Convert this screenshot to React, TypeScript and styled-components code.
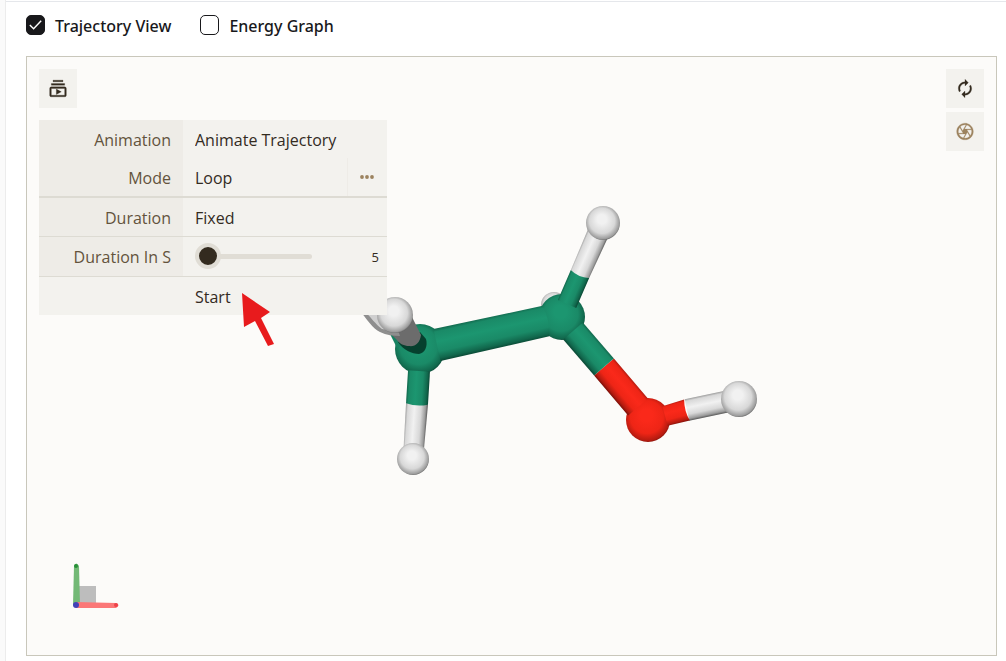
import React, { useState } from "react";
import styled, { createGlobalStyle, css } from "styled-components";

const Global = createGlobalStyle`
  *, *::before, *::after { box-sizing: border-box; }
  body { margin: 0; background: #fafafa; font-family: "Segoe UI", "Open Sans", "Noto Sans", sans-serif; color: #332b1f; }
  button, input, select { font: inherit; color: inherit; margin: 0; }
`;

const Page = styled.main`
  min-height: 100vh;
  display: flex;
  flex-direction: column;
  gap: 20px;
  margin-left: 5px;
  padding: 14px 9px 5px 20px;
  background: #fff;
  border-left: 1px solid #ececec;
  box-shadow: inset 0 1px #fff, inset 0 2px #e5e7eb;
`;

const Options = styled.div`
  display: flex;
  gap: 29px;
  height: 22px;
`;

const Option = styled.label`
  display: flex;
  align-items: center;
  gap: 10px;
  font: 500 16px/22px "Segoe UI", "Noto Sans", sans-serif;
  color: #18181b;
`;

const OptionText = styled.span`
  padding-top: 2px;
`;

const Check = styled.input`
  appearance: none;
  width: 19px;
  height: 20px;
  border: 1px solid #18181b;
  border-radius: 5px;
  background: #fff;
  &:checked {
    background: #18181b url("data:image/svg+xml,%3Csvg xmlns='http://www.w3.org/2000/svg' viewBox='0 0 18 18'%3E%3Cpath d='M3 9.500l4 4L15 5' fill='none' stroke='white' stroke-width='1.500'/%3E%3C/svg%3E");
  }
`;

const Viewer = styled.section`
  position: relative;
  flex: 1;
  display: flex;
  justify-content: space-between;
  align-items: flex-start;
  min-height: 600px;
  padding: 12px;
  border: 1px solid #c9c7bb;
  background: #fcfbf9;
`;

const Scene = styled.svg`
  position: absolute;
  inset: 0;
`;

const Column = styled.div<{ $gap: number }>`
  position: relative;
  display: flex;
  flex-direction: column;
  gap: ${(p) => p.$gap}px;
`;

const IconButton = styled.button<{ $muted?: boolean }>`
  display: grid;
  place-items: center;
  width: 38px;
  height: 39px;
  padding: 0;
  border: 0;
  background: #f3f2ee;
  color: ${(p) => (p.$muted ? "#9c835f" : "#332b1f")};
`;

const Panel = styled.form`
  width: 348px;
  font-size: 16px;
  background: #f3f2ee;
`;

const Row = styled.div<{ $rule?: number }>`
  display: grid;
  grid-template-columns: 144px 1fr auto;
  box-sizing: content-box;
  min-height: 38px;
  ${(p) =>
    p.$rule &&
    css`
      border-top: ${p.$rule}px solid #dddbd3;
    `}
`;

const Name = styled.label`
  padding: 2px 12px 0 0;
  background: #eeece7;
  color: #63533c;
  line-height: 36px;
  text-align: right;
`;

const Choice = styled.select`
  appearance: none;
  width: 100%;
  padding: 2px 12px 0;
  border: 0;
  background: transparent;
`;

const More = styled.button`
  display: grid;
  place-items: center;
  width: 40px;
  padding: 0;
  border: 0;
  border-left: 1px solid #eeece7;
  background: transparent;
  color: #9c835f;
`;

const SliderCell = styled.div`
  display: flex;
  align-items: center;
  justify-content: space-between;
  height: 39px;
  padding: 0 8px 0 12px;
`;

const Slider = styled.input`
  appearance: none;
  width: 117px;
  height: 26px;
  background: transparent;
  &::-webkit-slider-runnable-track {
    height: 5px;
    border-radius: 3px;
    background: #e0ddd5;
  }
  &::-webkit-slider-thumb {
    appearance: none;
    width: 26px;
    height: 26px;
    margin-top: -11px;
    border: 4px solid #e0ddd5;
    border-radius: 50%;
    background: #332b1f;
  }
`;

const Value = styled.output`
  font-size: 13px;
`;

const Start = styled.button`
  grid-column: 2 / -1;
  padding: 2px 12px 0;
  border: 0;
  background: transparent;
  text-align: left;
`;

const PANEL_ICON =
  "M4 6h16v2H4zm2-4h12v2H6zm14 8H4c-1.100 0-2 .9-2 2v8c0 1.100.9 2 2 2h16c1.100 0 2-.9 2-2v-8c0-1.100-.9-2-2-2zm0 10H4v-8h16v8zm-10-7.270v6.530L16 16z";
const RESET_ICON =
  "M12 6v3l4-4-4-4v3c-4.420 0-8 3.580-8 8 0 1.570.46 3.030 1.240 4.260L6.700 14.800c-.45-.83-.7-1.790-.7-2.800 0-3.310 2.690-6 6-6zm6.760 1.740L17.300 9.200c.44.84.7 1.790.7 2.800 0 3.310-2.690 6-6 6v-3l-4 4 4 4v-3c4.420 0 8-3.580 8-8 0-1.570-.46-3.030-1.240-4.260z";
const CAMERA_ICON =
  "M14.250 2.260l-.08-.04-.01.02C13.460 2.090 12.740 2 12 2 6.480 2 2 6.480 2 12s4.480 10 10 10 10-4.480 10-10c0-4.750-3.310-8.720-7.750-9.740zM19.410 9h-7.990l2.710-4.700c2.400.66 4.350 2.420 5.280 4.700zM13.100 4.080L10.270 9l-1.150 2L6.400 6.300C7.840 4.880 9.820 4 12 4c.37 0 .74.03 1.100.08zM5.700 7.090L8.540 12l1.150 2H4.260C4.100 13.360 4 12.690 4 12c0-1.850.64-3.550 1.700-4.910zM4.590 15h7.980l-2.710 4.700c-2.400-.67-4.340-2.420-5.270-4.700zm6.310 4.910L14.890 13l2.720 4.700C16.160 19.120 14.180 20 12 20c-.38 0-.74-.04-1.100-.09zm7.400-3l-4-6.910h5.430c.17.64.27 1.310.27 2 0 1.850-.64 3.550-1.700 4.910z";

function Icon({ d }: { d: string }) {
  return (
    <svg width="20" height="21" viewBox="0 0 24 24" fill="currentColor" stroke="currentColor" strokeWidth=".3" aria-hidden="true">
      <path d={d} />
    </svg>
  );
}

type Tone = "c" | "h" | "o";

/* A cylinder drawn along its own axis, shaded across its width. */
function Bond({ from, to, width, endWidth = width, tone, bulge = 4 }: { from: [number, number]; to: [number, number]; width: number; endWidth?: number; tone: Tone; bulge?: number }) {
  const dx = to[0] - from[0];
  const dy = to[1] - from[1];
  const len = Math.hypot(dx, dy);
  const angle = (Math.atan2(dy, dx) * 180) / Math.PI;
  const a = width / 2;
  const b = endWidth / 2;
  const shade = dx < 0 ? `${tone}-flip` : tone;
  return (
    <path
      transform={`translate(${from[0]} ${from[1]}) rotate(${angle})`}
      d={`M0 ${-a} L${len} ${-b} Q${len + bulge} 0 ${len} ${b} L0 ${a} Z`}
      fill={`url(#bond-${shade})`}
    />
  );
}

function Molecule() {
  const tones: [Tone, string, string, string, string][] = [
    ["c", "#1c9670", "#1a8a67", "#11674c", "#0a4734"],
    ["h", "#f1f1f1", "#d8d8d8", "#9c9c9c", "#565656"],
    ["o", "#fa291a", "#ee2516", "#b51b10", "#7c0f08"],
  ];
  return (
    <Scene width="969" height="598" viewBox="27 57 969 598" role="img" aria-label="Ball and stick molecule">
      <defs>
        {tones.map(([id, light, mid, dark, edge]) => (
          <React.Fragment key={id}>
            <radialGradient id={`ball-${id}`} cx=".48" cy=".47" r=".55" fx=".46" fy=".36">
              <stop offset="0" stopColor={light} />
              <stop offset=".25" stopColor={light} />
              <stop offset=".68" stopColor={mid} />
              <stop offset=".92" stopColor={dark} />
              <stop offset="1" stopColor={edge} />
            </radialGradient>
            {[false, true].map((flip) => (
              <linearGradient key={String(flip)} id={`bond-${id}${flip ? "-flip" : ""}`} x1="0" y1={flip ? 1 : 0} x2="0" y2={flip ? 0 : 1}>
                <stop offset="0" stopColor={dark} />
                <stop offset=".1" stopColor={mid} />
                <stop offset=".4" stopColor={light} />
                <stop offset=".7" stopColor={mid} />
                <stop offset=".9" stopColor={dark} />
                <stop offset="1" stopColor={edge} />
              </linearGradient>
            ))}
          </React.Fragment>
        ))}
      </defs>

      <circle cx="554" cy="305" r="13" fill="url(#ball-h)" />
      <circle cx="562" cy="317" r="23" fill="url(#ball-c)" />
      <circle cx="420" cy="349" r="25" fill="url(#ball-c)" />
      <circle cx="648" cy="420" r="22" fill="url(#ball-o)" />

      <Bond from={[603, 222]} to={[580, 274]} width={22} endWidth={20} tone="h" />
      <Bond from={[567, 304]} to={[580, 274]} width={20} tone="c" bulge={-4} />
      <Bond from={[638, 407]} to={[604, 367]} width={26} tone="o" bulge={0} />
      <Bond from={[573, 331]} to={[604, 367]} width={26} tone="c" bulge={0} />
      <Bond from={[739, 399]} to={[687, 410]} width={22} tone="h" bulge={0} />
      <Bond from={[665, 416]} to={[687, 410]} width={20} endWidth={22} tone="o" bulge={-3} />
      <Bond from={[437, 345]} to={[546, 321]} width={33} endWidth={31} tone="c" />
      <Bond from={[413, 459]} to={[417, 404]} width={20} endWidth={22} tone="h" />
      <Bond from={[419, 371]} to={[417, 404]} width={22} tone="c" bulge={3} />

      <path d="M389 332l8 16 10-6-5-12z" fill="#178161" />
      <path d="M398 342c5 8 14 12 21 12 6-1 9-8 7-15l-6-7z" fill="#06402e" />
      <path d="M411 315l10 20c-1 8-6 12-12 11-5 0-9-2-13-7l-7-7z" fill="#6c6c6c" />
      <path d="M360 311c6 7 13 18 20 21 6 3 14 4 20 4l-8-24z" fill="#8e8e8e" />
      <path d="M364 311c6 5 12 14 18 18l13 2-7-20z" fill="#cfcfcf" />
      <circle cx="395" cy="315" r="18" fill="url(#ball-h)" />
      <circle cx="603" cy="223" r="17" fill="url(#ball-h)" />
      <circle cx="739" cy="399" r="18" fill="url(#ball-h)" />
      <circle cx="413" cy="459" r="16" fill="url(#ball-h)" />

      <path d="M77 586h19v19H77z" fill="#bdbdbd" />
      <path d="M74 566q2-5 5 0l1 39h-7z" fill="#73b976" />
      <path d="M76 602l40 1q5 2 0 5H76z" fill="#fb7777" />
      <circle cx="76" cy="566" r="2" fill="#289038" />
      <circle cx="116" cy="605" r="2" fill="#ed4149" />
      <circle cx="76" cy="605" r="3" fill="#4142b7" />
    </Scene>
  );
}

const Pointer = styled.svg`
  position: absolute;
  left: 214px;
  top: 236px;
  pointer-events: none;
`;

export default function App() {
  const [seconds, setSeconds] = useState(5);
  return (
    <>
      <Global />
      <Page>
        <Options>
          <Option>
            <Check type="checkbox" defaultChecked />
            <OptionText>Trajectory View</OptionText>
          </Option>
          <Option>
            <Check type="checkbox" />
            <OptionText>Energy Graph</OptionText>
          </Option>
        </Options>
        <Viewer>
          <Molecule />
          <Column $gap={12}>
            <IconButton type="button" aria-label="Animations">
              <Icon d={PANEL_ICON} />
            </IconButton>
            <Panel onSubmit={(e) => e.preventDefault()}>
              <Row>
                <Name htmlFor="animation">Animation</Name>
                <Choice id="animation">
                  <option>Animate Trajectory</option>
                </Choice>
              </Row>
              <Row>
                <Name htmlFor="mode">Mode</Name>
                <Choice id="mode">
                  <option>Loop</option>
                </Choice>
                <More type="button" aria-label="More options">
                  <svg width="15" height="4" viewBox="0 0 15 4" fill="currentColor">
                    <circle cx="2" cy="2" r="1.900" />
                    <circle cx="7" cy="2" r="1.900" />
                    <circle cx="12" cy="2" r="1.900" />
                  </svg>
                </More>
              </Row>
              <Row $rule={2}>
                <Name htmlFor="duration">Duration</Name>
                <Choice id="duration">
                  <option>Fixed</option>
                </Choice>
              </Row>
              <Row $rule={1}>
                <Name htmlFor="seconds">Duration In S</Name>
                <SliderCell>
                  <Slider id="seconds" type="range" min={5} max={60} value={seconds} onChange={(e) => setSeconds(Number(e.target.value))} />
                  <Value htmlFor="seconds">{seconds}</Value>
                </SliderCell>
              </Row>
              <Row $rule={1}>
                <Start type="submit">Start</Start>
              </Row>
            </Panel>
          </Column>
          <Column $gap={4}>
            <IconButton type="button" aria-label="Reset camera">
              <Icon d={RESET_ICON} />
            </IconButton>
            <IconButton type="button" aria-label="Screenshot" $muted>
              <Icon d={CAMERA_ICON} />
            </IconButton>
          </Column>
          <Pointer width="34" height="54" viewBox="0 0 34 54" aria-hidden="true">
            <path d="M1 0l28 19-9 6 13 26-6 2-13-25-11 6z" fill="#e81b1d" />
          </Pointer>
        </Viewer>
      </Page>
    </>
  );
}
